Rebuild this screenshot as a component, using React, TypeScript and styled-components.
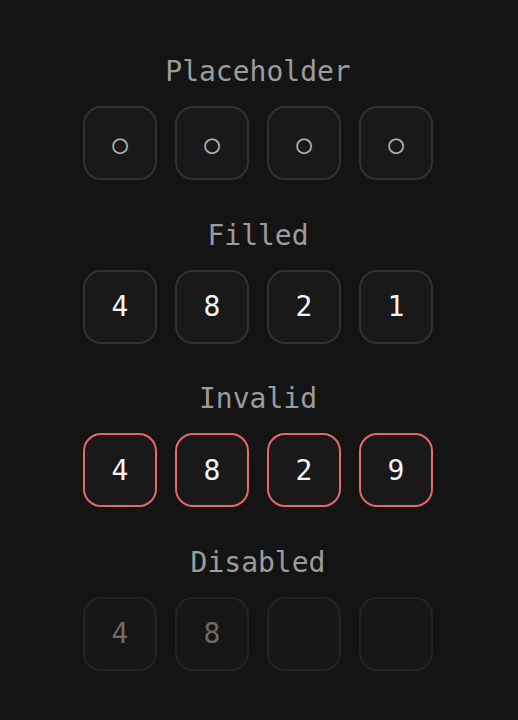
import React from 'react'
import styled, { createGlobalStyle } from 'styled-components'

const GlobalStyle = createGlobalStyle`
  html, body {
    margin: 0;
    background: #141414;
  }
  body {
    font-family: "DejaVu Sans Mono", "Liberation Mono", monospace;
  }
`

const Page = styled.div`
  display: flex;
  flex-direction: column;
  align-items: center;
  gap: 39.5px;
  padding: 56px 2px 0 0;
  min-height: 720px;
  box-sizing: border-box;
  background: #141414;
`

const Section = styled.section`
  display: flex;
  flex-direction: column;
  align-items: center;
  gap: 18px;
`

const Label = styled.div`
  font-size: 28px;
  line-height: 32px;
  color: #9c9c9c;
`

const Row = styled.div`
  display: flex;
  gap: 18px;
`

const Cell = styled.input<{ $invalid?: boolean }>`
  width: 74px;
  height: 74px;
  box-sizing: border-box;
  padding: 0;
  margin: 0;
  border-radius: 18px;
  border: 2px solid ${(p) => (p.$invalid ? '#e8676b' : '#323232')};
  background: #191919;
  color: #f4f4f4;
  font-family: inherit;
  font-size: 28px;
  text-align: center;
  outline: none;

  &::placeholder {
    color: #b4b4b4;
    font-size: 26px;
  }

  &:disabled {
    border-color: #232323;
    background: #161616;
    color: #6c6c6c;
  }
`

type Group = {
  label: string
  values: string[]
  invalid?: boolean
  disabled?: boolean
}

const groups: Group[] = [
  { label: 'Placeholder', values: ['', '', '', ''] },
  { label: 'Filled', values: ['4', '8', '2', '1'] },
  { label: 'Invalid', values: ['4', '8', '2', '9'], invalid: true },
  { label: 'Disabled', values: ['4', '8', '', ''], disabled: true },
]

export default function App() {
  return (
    <>
      <GlobalStyle />
      <Page>
        {groups.map((g) => (
          <Section key={g.label}>
            <Label>{g.label}</Label>
            <Row>
              {g.values.map((v, i) => (
                <Cell
                  key={i}
                  value={v}
                  readOnly
                  maxLength={1}
                  inputMode="numeric"
                  placeholder={g.disabled ? '' : '○'}
                  disabled={g.disabled}
                  $invalid={g.invalid}
                  aria-invalid={g.invalid}
                />
              ))}
            </Row>
          </Section>
        ))}
      </Page>
    </>
  )
}
